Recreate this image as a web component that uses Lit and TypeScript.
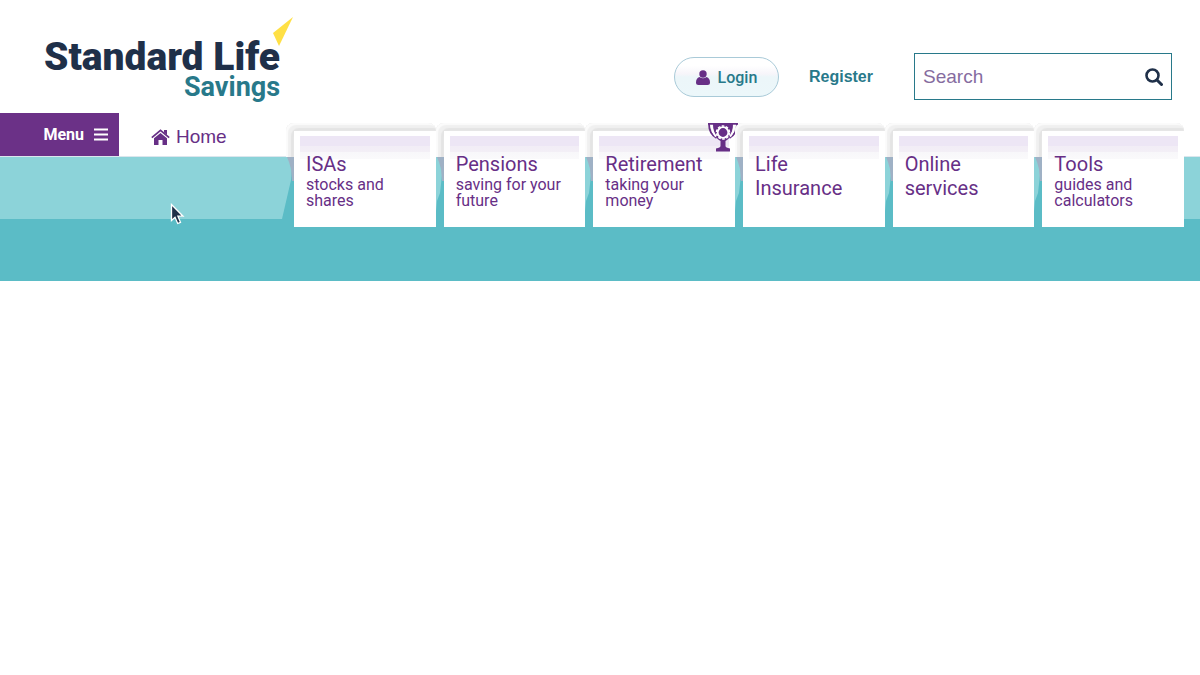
import { LitElement, html, css, svg, nothing } from "lit";
import { customElement, property } from "lit/decorators.js";

@customElement("nav-card")
export class NavCard extends LitElement {
  @property() heading = "";
  @property() note = "";
  @property({ type: Boolean }) award = false;
  @property({ type: Boolean }) first = false;

  static styles = css`
    :host {
      display: block;
      position: relative;
      flex: 1;
      min-width: 0;
      font-family: Roboto, "Open Sans", sans-serif;
      color: #672f86;
    }
    .halo {
      position: absolute;
      left: -8px;
      right: 0;
      top: -8px;
      height: 34px;
      border-radius: 8px 8px 0 0;
      background: #f7f7f7;
      box-shadow: inset 2px 2px 1px #fbfbfb, inset 5px 5px 1px #f0f0f0, inset 8px 8px 1px #e4e4e4;
    }
    .sliver {
      position: absolute;
      left: -8px;
      top: 26px;
      width: 8px;
      height: 62px;
    }
    .card {
      position: relative;
      display: block;
      box-sizing: border-box;
      height: 96px;
      padding: 5px 6px 0 6px;
      background: #fff;
      color: inherit;
      text-decoration: none;
    }
    .tint {
      height: 23px;
      background: linear-gradient(#ede6f5 10px, #f2edf6 10px, #f3eff6 16px, #f8f7fa 16px, #fafafb);
    }
    .text {
      margin: -7px 0 0 6px;
      position: relative;
    }
    .heading {
      display: block;
      font-size: 20px;
      line-height: 24px;
    }
    .note {
      display: block;
      margin-top: 1px;
      font-size: 16px;
      line-height: 16px;
    }
    .trophy {
      position: absolute;
      right: -4px;
      top: -9px;
      width: 32px;
      height: 30px;
    }
  `;

  render() {
    return html`
      <span class="halo"></span>
      <svg class="sliver" viewBox="0 0 8 62" preserveAspectRatio="none" aria-hidden="true">
        ${this.first ? nothing : svg`<path d="M0 0H6V18L4 36 1 44 0 54Z" fill="#8cd3d9" />`}
        <path d="M1 0H8V24H6L5 12 3 5Z" fill="#9fb1c5" />
      </svg>
      <a class="card" href="#">
        <div class="tint"></div>
        <div class="text">
          <span class="heading">${this.heading}</span>
          ${this.note ? html`<span class="note">${this.note}</span>` : nothing}
        </div>
      </a>
      ${this.award
        ? html`<svg class="trophy" viewBox="0 0 32 30" aria-hidden="true">
            <path d="M1 1.800H31M2 1.800C2 8 5 13.500 9.500 16M30 1.800C30 8 27 13.500 22.500 16" fill="none" stroke="#672f86" stroke-width="1.800" />
            <path d="M6 1H26C26 10 24 16 18.500 19V24Q18.500 25.500 23 26.500V29.500H9V26.500Q13.500 25.500 13.500 24V19C8 16 6 10 6 1Z" fill="#672f86" />
            <path d="M4.500 3C5 8 6.500 11.500 9 14.500M27.500 3C27 8 25.500 11.500 23 14.500" fill="none" stroke="#fff" stroke-width="2" />
            <circle cx="16" cy="10.500" r="5.300" fill="none" stroke="#fff" stroke-width="1.800" />
            <circle cx="16" cy="10.500" r="6.500" fill="none" stroke="#fff" stroke-width="1.500" stroke-dasharray="2.600 1.484" />
          </svg>`
        : nothing}
    `;
  }
}

@customElement("app-root")
export class AppRoot extends LitElement {
  static styles = css`
    :host {
      display: block;
      min-height: 100vh;
      background: #fff;
      font-family: Roboto, "Open Sans", sans-serif;
    }
    .top {
      display: flex;
      align-items: flex-start;
      height: 113px;
      padding: 0 28px 0 44px;
      box-sizing: border-box;
    }
    .logo {
      position: relative;
      padding-top: 37px;
      margin-right: auto;
      text-align: right;
      text-decoration: none;
    }
    .brand {
      display: block;
      font-size: 39px;
      line-height: 40px;
      color: #1f3049;
      font-weight: 900;
    }
    .sub {
      display: block;
      font-size: 27px;
      line-height: 20px;
      color: #28798a;
      font-weight: 700;
    }
    .spark {
      position: absolute;
      right: -13px;
      top: 17px;
      width: 21px;
      height: 29px;
    }
    .login {
      display: flex;
      align-items: center;
      justify-content: center;
      gap: 8px;
      width: 105px;
      height: 40px;
      margin-top: 57px;
      border: 1px solid #a9cad8;
      border-radius: 20px;
      background: linear-gradient(#fff 20%, #f7f5fa 42%, #ecf6f9 50%, #ecf7fa);
      font: 500 16px Roboto, sans-serif;
      color: #28798a;
    }
    .register {
      margin: 67px 41px 0 30px;
      font: 700 16px/20px "Liberation Sans", Arial, sans-serif;
      color: #28798a;
      text-decoration: none;
    }
    .search {
      display: flex;
      align-items: center;
      box-sizing: border-box;
      width: 258px;
      height: 47px;
      margin-top: 53px;
      padding: 0 8px;
      border: 1px solid #28798a;
    }
    .field {
      flex: 1;
      min-width: 0;
      padding: 0;
      border: 0;
      outline: 0;
      background: none;
      font: 19px "Liberation Sans", Arial, sans-serif;
      color: #672f86;
    }
    .field::placeholder {
      color: #866ca0;
      opacity: 1;
    }
    .go {
      display: flex;
      padding: 0;
      border: 0;
      background: none;
    }
    .band {
      display: grid;
      grid-template-columns: 294px minmax(0, 1fr) 16px;
      height: 168px;
      background: linear-gradient(#fff 44px, #5bbcc6 44px);
    }
    .links {
      display: flex;
      height: 43px;
    }
    .menu {
      display: flex;
      align-items: center;
      justify-content: flex-end;
      gap: 10px;
      width: 119px;
      padding: 0 11px 0 0;
      border: 0;
      background: #6b3187;
      color: #fff;
      font: 700 16px Roboto, sans-serif;
    }
    .home {
      display: flex;
      align-items: center;
      gap: 6px;
      margin-left: 32px;
      padding-top: 4px;
      font: 19px "Liberation Sans", Arial, sans-serif;
      color: #672f86;
      text-decoration: none;
    }
    .light {
      height: 62px;
      border-top: 1px solid #dbe6ed;
      background: #8cd3d9;
    }
    .slant {
      clip-path: polygon(0 0, 288px 0, 292px 10px, 291px 24px, 282px 100%, 0 100%);
    }
    .edge {
      margin-top: 43px;
    }
    .cards {
      display: flex;
      gap: 8px;
      padding-top: 18px;
    }
    .pointer {
      position: absolute;
      left: 170px;
      top: 203px;
      width: 16px;
      height: 22px;
    }
  `;

  private cards = [
    { heading: "ISAs", note: "stocks and shares" },
    { heading: "Pensions", note: "saving for your future" },
    { heading: "Retirement", note: "taking your money", award: true },
    { heading: "Life Insurance", note: "" },
    { heading: "Online services", note: "" },
    { heading: "Tools", note: "guides and calculators" },
  ];

  render() {
    return html`
      <header>
        <div class="top">
          <a class="logo" href="#">
            <span class="brand">Standard Life</span>
            <span class="sub">Savings</span>
            <svg class="spark" viewBox="0 0 21 29" aria-hidden="true">
              <path d="M21 0 1 16 7 29Z" fill="#ffe045" />
            </svg>
          </a>
          <button class="login" type="button">
            <svg width="14" height="15" viewBox="0 0 14 15" aria-hidden="true">
              <circle cx="7" cy="4" r="3.700" fill="#672f86" />
              <path d="M3.500 7Q7 9.500 10.500 7Q14 8 14 12.500Q14 15 11.500 15H2.500Q0 15 0 12.500Q0 8 3.500 7Z" fill="#672f86" />
            </svg>
            Login
          </button>
          <a class="register" href="#">Register</a>
          <form class="search" role="search">
            <input class="field" type="search" aria-label="Search" placeholder="Search" />
            <button class="go" type="button" aria-label="Submit search">
              <svg width="18" height="18" viewBox="0 0 18 18" aria-hidden="true">
                <circle cx="7.500" cy="7.500" r="6" fill="none" stroke="#1f3049" stroke-width="2.600" />
                <path d="M12 12 16.500 16.500" stroke="#1f3049" stroke-width="3" stroke-linecap="round" />
              </svg>
            </button>
          </form>
        </div>
        <nav class="band">
          <div>
            <div class="links">
              <button class="menu" type="button">
                Menu
                <svg width="14" height="13" viewBox="0 0 14 13" aria-hidden="true">
                  <path d="M0 1.500H14M0 6.500H14M0 11.500H14" stroke="#fff" stroke-width="2" />
                </svg>
              </button>
              <a class="home" href="#">
                <svg width="19" height="16" viewBox="0 0 19 16" aria-hidden="true">
                  <path d="M9.500 4 16 9.300V16H11.500V11H7.500V16H3V9.300ZM13 1H16V6L13 3.500Z" fill="#672f86" />
                  <path d="M.8 8.600 9.500 1.400 18.200 8.600" fill="none" stroke="#672f86" stroke-width="1.800" />
                </svg>
                Home
              </a>
            </div>
            <div class="light slant"></div>
          </div>
          <div class="cards">
            ${this.cards.map(
              (c, i) =>
                html`<nav-card .heading=${c.heading} .note=${c.note} .award=${!!c.award} .first=${i === 0}></nav-card>`
            )}
          </div>
          <div class="light edge"></div>
        </nav>
      </header>
      <svg class="pointer" viewBox="0 0 16 22" aria-hidden="true">
        <path d="M1.500 1.500V17.500L5 14.300 7.700 20.500 10.500 19.300 7.900 13.200H13Z" fill="#1f3049" stroke="#fff" stroke-width="1.300" />
      </svg>
    `;
  }
}
